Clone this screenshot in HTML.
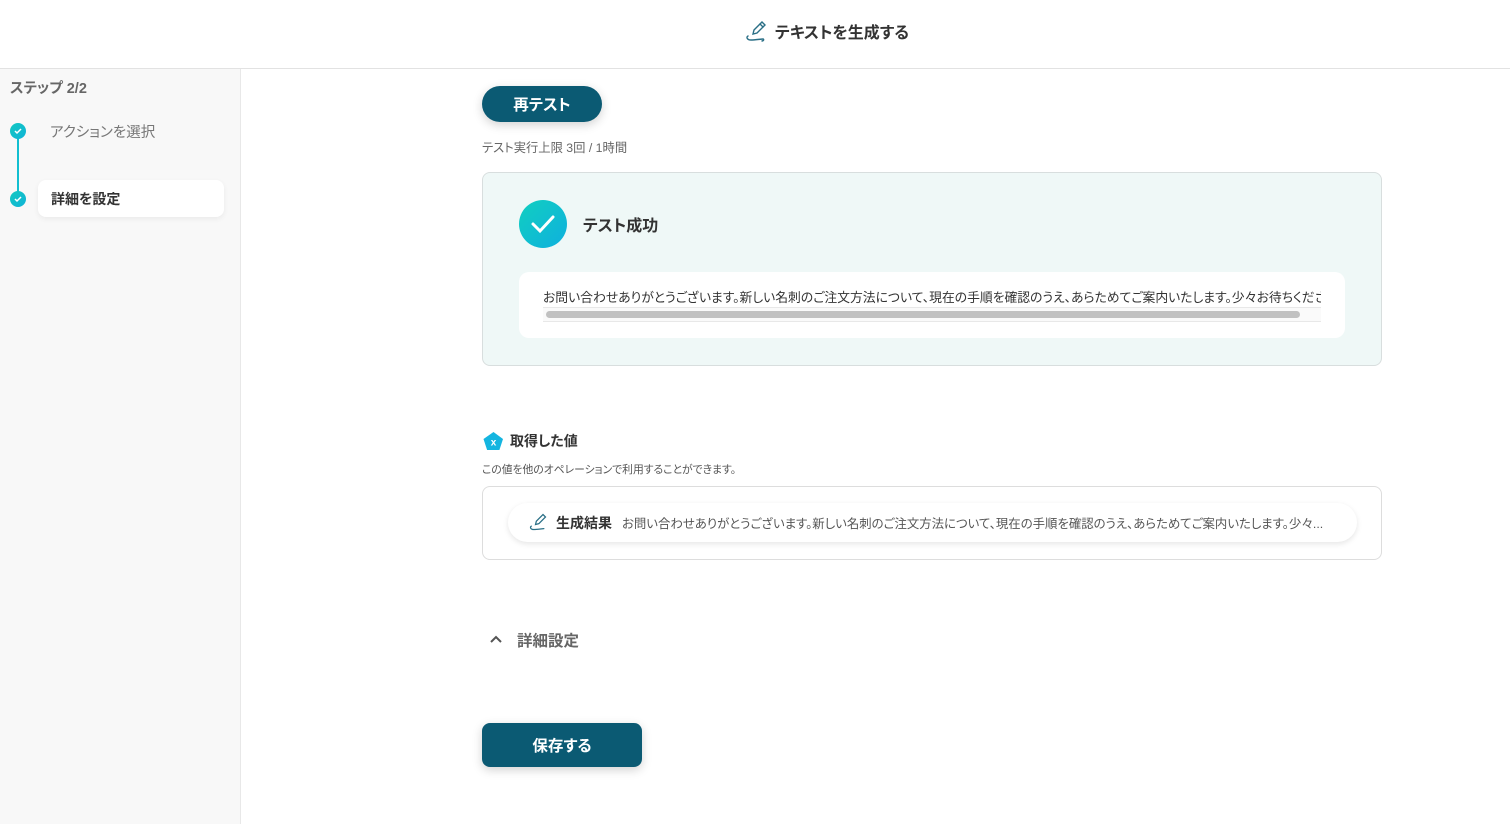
<!DOCTYPE html>
<html><head><meta charset="utf-8"><style>
*{box-sizing:border-box;margin:0;padding:0}
body{width:1510px;height:824px;overflow:hidden;background:#fff;font-family:"Liberation Sans","Noto Sans CJK JP",sans-serif;color:#333;position:relative;font-feature-settings:"palt"}
.hdr{position:absolute;left:0;top:0;width:1510px;height:69px;border-bottom:1px solid #e2e2e2;background:#fff}
.hdr .t{position:absolute;left:775px;top:19px;font-size:16px;font-weight:bold;color:#333}
.side{position:absolute;left:0;top:69px;width:241px;height:755px;background:#f8f8f8;border-right:1px solid #e8e8e8}
.abs{position:absolute}
.dot{position:absolute;width:16px;height:16px;border-radius:50%;background:linear-gradient(135deg,#12c8c0,#10b3d8)}
.btn{position:absolute;background:#0b5a73;color:#fff;font-weight:bold;display:flex;align-items:center;justify-content:center;box-shadow:0 3px 10px rgba(0,0,0,.18)}
</style></head><body>
<div class="hdr">
<svg class="abs" style="left:744px;top:19px" width="24" height="24" viewBox="0 0 24 24" fill="none" stroke="#2a6f86" stroke-width="1.4" stroke-linecap="round"><path d="M9 15l1-4 8-8 3 3-8 8-4 1z"/><path d="M16 5l3 3"/><path d="M4 17c-2 1-1 4 3 4 4 0 10-1 12-1 1 0 1 2-1 2"/></svg>
<div class="t">テキストを生成する</div>
</div>
<div class="side">
<div class="abs" style="left:10px;top:8px;font-size:14.5px;font-weight:bold;color:#666">ステップ 2/2</div>
<div class="abs" style="left:17px;top:62px;width:2px;height:68px;background:#12bfd0"></div>
<div class="dot" style="left:10px;top:54px"></div>
<svg class="abs" style="left:13px;top:57px" width="10" height="10" viewBox="0 0 10 10"><path d="M2 5l2 2 4-4" stroke="#fff" stroke-width="1.5" fill="none"/></svg>
<div class="abs" style="left:50px;top:52px;font-size:14.5px;color:#777">アクションを選択</div>
<div class="dot" style="left:10px;top:122px"></div>
<svg class="abs" style="left:13px;top:125px" width="10" height="10" viewBox="0 0 10 10"><path d="M2 5l2 2 4-4" stroke="#fff" stroke-width="1.5" fill="none"/></svg>
<div class="abs" style="left:38px;top:111px;width:186px;height:37px;background:#fff;border-radius:8px;box-shadow:0 2px 6px rgba(0,0,0,.06)"></div>
<div class="abs" style="left:51px;top:120px;font-size:14px;font-weight:bold;color:#333">詳細を設定</div>
</div>
<div class="btn" style="left:482px;top:86px;width:120px;height:36px;border-radius:18px;font-size:15.5px">再テスト</div>
<div class="abs" style="left:482px;top:138px;font-size:12.3px;color:#666">テスト実行上限 3回 / 1時間</div>
<div class="abs" style="left:482px;top:172px;width:900px;height:194px;background:#eff8f7;border:1px solid #d8dede;border-radius:8px"></div>
<div class="abs" style="left:519px;top:200px;width:48px;height:48px;border-radius:50%;background:linear-gradient(135deg,#10cfc0,#0fb0de)"></div>
<svg class="abs" style="left:519px;top:200px" width="48" height="48"><path d="M14 24l7 7 13-14" stroke="#fff" stroke-width="3" fill="none" stroke-linecap="round"/></svg>
<div class="abs" style="left:583px;top:212px;font-size:16px;font-weight:bold">テスト成功</div>
<div class="abs" style="left:519px;top:272px;width:826px;height:66px;background:#fff;border-radius:10px"></div>
<div class="abs" style="left:543px;top:287px;width:778px;font-size:12.8px;white-space:nowrap;overflow:hidden;color:#333">お問い合わせありがとうございます。新しい名刺のご注文方法について、現在の手順を確認のうえ、あらためてご案内いたします。少々お待ちくださ</div>
<div class="abs" style="left:543px;top:307px;width:778px;height:15px;border-top:1px solid #e8e8e8;border-bottom:1px solid #e8e8e8;background:#fafafa"></div>
<div class="abs" style="left:546px;top:311px;width:754px;height:7px;border-radius:4px;background:#c1c1c1"></div>
<svg class="abs" style="left:483px;top:431px" width="21" height="20" viewBox="0 0 21 20"><path d="M10.5 1l9.5 7-3.6 11H4.1L.5 8z" fill="#14b5e0"/><text x="10.5" y="14.5" font-size="10" fill="#fff" text-anchor="middle" font-family="Liberation Sans" font-weight="bold">x</text></svg>
<div class="abs" style="left:510px;top:431px;font-size:14px;font-weight:bold">取得した値</div>
<div class="abs" style="left:482px;top:461px;font-size:10.8px;color:#555">この値を他のオペレーションで利用することができます。</div>
<div class="abs" style="left:482px;top:486px;width:900px;height:74px;border:1px solid #ddd;border-radius:8px"></div>
<div class="abs" style="left:508px;top:503px;width:849px;height:39px;border-radius:20px;background:#fff;box-shadow:0 2px 6px rgba(0,0,0,.1)"></div>
<svg class="abs" style="left:528px;top:512px" width="20" height="20" viewBox="0 0 24 24" fill="none" stroke="#2a6f86" stroke-width="1.5" stroke-linecap="round"><path d="M9 15l1-4 8-8 3 3-8 8-4 1z"/><path d="M4 17c-2 1-1 4 3 4 4 0 10-1 12-1"/></svg>
<div class="abs" style="left:556px;top:513px;font-size:14px;font-weight:bold">生成結果</div>
<div class="abs" style="left:622px;top:514px;font-size:12.4px;color:#555;white-space:nowrap">お問い合わせありがとうございます。新しい名刺のご注文方法について、現在の手順を確認のうえ、あらためてご案内いたします。少々...</div>
<svg class="abs" style="left:488px;top:631px" width="16" height="16"><path d="M3 11l5-5 5 5" stroke="#555" stroke-width="2" fill="none"/></svg>
<div class="abs" style="left:517px;top:629px;font-size:15.5px;font-weight:bold;color:#666">詳細設定</div>
<div class="btn" style="left:482px;top:723px;width:160px;height:44px;border-radius:8px;font-size:15.5px">保存する</div>
</body></html>
